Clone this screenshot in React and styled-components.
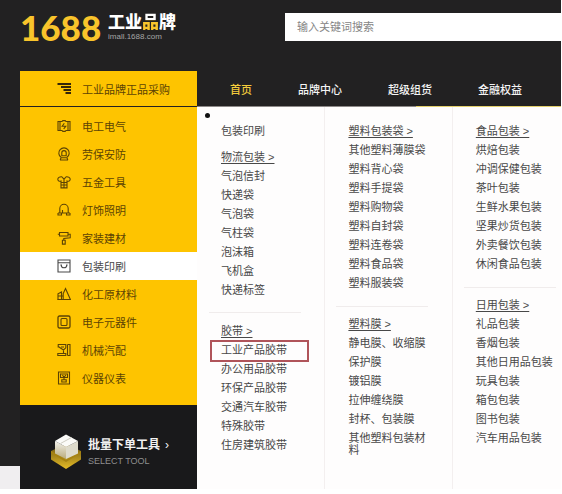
import React from 'react';
import styled, { createGlobalStyle } from 'styled-components';

const GlobalStyle = createGlobalStyle`
	:root {
		--yellow: #fec400;
		--dark: #222122;
		--brown: #5c4304;
		--text: #484848;
	}

	* {
		box-sizing: border-box;
	}

	body {
		margin: 0;
		background: #fff;
		color: var(--text);
		font-family: "Liberation Sans", "Noto Sans CJK SC", sans-serif;
		font-size: 11px;
	}

	a {
		color: inherit;
		text-decoration: none;
	}

	ul {
		margin: 0;
		padding: 0;
		list-style: none;
	}
`;

const Page = styled.div`
	display: flex;
	margin-right: 1px;
	background: var(--dark);
`;
const Gutter = styled.div`
	width: 20px;
	flex: none;
	display: flex;
	flex-direction: column;
	justify-content: flex-end;

	&::after {
		content: "";
		height: 23px;
		background: #f0eef0;
	}
`;
const Main = styled.div`
	flex: 1;
	min-width: 0;
`;

const Header = styled.header`
	display: grid;
	grid-template-columns: 265px 1fr;
	align-items: start;
	padding-top: 13px;
	height: 71px;
`;
const Logo = styled.a`
	display: flex;
	gap: 6px;
`;
const LogoNumber = styled.span`
	width: 82px;
	font-family: Lato, sans-serif;
	font-weight: 900;
	font-size: 35px;
	line-height: 28px;
	color: #f9c42b;
`;
const LogoText = styled.span`
	display: flex;
	flex-direction: column;
`;
const LogoTitle = styled.span`
	font-family: "Noto Sans CJK SC", sans-serif;
	font-weight: 900;
	font-size: 17px;
	line-height: 16px;
	color: #fff;
`;
const LogoAccent = styled.span`
	background: linear-gradient(#fff 50%, #f9c42b 50%);
	background-clip: text;
	color: transparent;
`;
const LogoDomain = styled.span`
	font-size: 8px;
	line-height: 16px;
	color: #a5a5a5;
`;
const Search = styled.input`
	width: 100%;
	height: 28px;
	padding: 0 12px;
	border: 0;
	border-radius: 0;
	background: #fff;
	font: inherit;
	outline: none;

	&::placeholder {
		color: #858585;
		opacity: 1;
	}
`;

const Body = styled.div`
	display: grid;
	grid-template-columns: 177px 1fr;
`;
const Sidebar = styled.aside`
	display: flex;
	flex-direction: column;
`;
const SidebarLink = styled.a`
	display: flex;
	align-items: center;
	gap: 11px;
	height: ${props => props.$title ? '35px' : '28px'};
	padding-left: 37px;
	background: ${props => props.$active ? '#fff' : 'var(--yellow)'};
	color: ${props => props.$active ? 'var(--text)' : 'var(--brown)'};
`;
const Categories = styled.ul`
	margin-top: 1px;
	padding: 5px 0 13px;
	background: var(--yellow);
`;
const Tool = styled.a`
	display: flex;
	align-items: center;
	gap: 7px;
	height: 84px;
	padding: 10px 0 0 31px;
	background: #19191b;
`;
const ToolTitle = styled.strong`
	display: block;
	font-size: 12px;
	line-height: 18px;
	color: #f2f2f2;
`;
const ToolArrow = styled.span`
	margin-left: 5px;
	font-weight: 400;
`;
const ToolCaption = styled.span`
	display: block;
	font-size: 9px;
	line-height: 14px;
	color: #8f8f8f;
`;

const Content = styled.div`
	display: flex;
	flex-direction: column;
	min-width: 0;
`;
const Nav = styled.nav`
	display: flex;
	align-items: center;
	gap: 46px;
	height: 35px;
	padding-left: 33px;
	white-space: nowrap;
`;
const NavLink = styled.a`
	font-weight: 500;
	color: ${props => props.$active ? '#f3cb3c' : '#f4f4f4'};
`;
const Panel = styled.div`
	position: relative;
	flex: 1;
	display: grid;
	grid-template-columns: 7fr 7fr 6fr;
	border-top: 1px solid;
	border-image: linear-gradient(to right, #8d8988 60%, #e2cf6c 60%) 1;
	background: #fefdfd;

	&::before {
		content: "";
		position: absolute;
		top: 6px;
		left: 8px;
		width: 5px;
		height: 5px;
		border-radius: 50%;
		background: #111;
	}
`;
const Column = styled.div`
	padding: 15px 0 0 12px;

	+ div {
		padding-left: 11px;
		border-left: 1px solid #f3efef;
	}
`;
const Group = styled.section`
	max-width: 92px;
	padding-left: 12px;
	margin-bottom: ${props => props.$plain ? '7px' : '0'};
`;
const Divider = styled.hr`
	max-width: 92px;
	margin: ${props => props.$short ? '12px 0 9px' : '13px 0 8px'};
	border: 0;
	border-top: 1px solid #f0ecec;
`;
const GroupTitle = styled.h2`
	margin: 0;
	font-size: 11px;
	font-weight: 400;
	line-height: 19px;

	a {
		text-decoration: ${props => props.$plain ? 'none' : 'underline'};
		text-underline-offset: 2px;
	}
`;
const Item = styled.li`
	position: relative;
	padding: 3px 0 4px;
	line-height: 12px;

	${props => props.$marked && `
		&::after {
			content: "";
			position: absolute;
			inset: -1px -8px -2px -11px;
			border: 2px solid #b0545a;
			pointer-events: none;
		}
	`}
`;

const Icon = ({ children }) => (
	<svg width="14" height="14" viewBox="0 0 14 14" fill="none" stroke="currentColor" strokeWidth="1.1" aria-hidden="true">
		{children}
	</svg>
);

const icons = {
	menu: <path d="M0.5 2H14.5M4 5H14.5M6.500 8H14.5M8.500 11H14.5" stroke="#33250a" strokeWidth="1.9" />,
	electric: <path d="M5 2.500H1v9h4l.8.9h2.400l.8-.9H13v-9H9l-.8-.9H5.800zM3 2.500v9M11 2.500v9M7.300 4.300L5.200 7.200h3.600L6.700 10" />,
	safety: <path d="M4 10.300A5.200 5.200 0 1 1 10 10.300M4.800 8.700V5.800a2.200 2.200 0 0 1 4.400 0v2.900zM4 10.800h6M3 13h8M4 10.800L3.200 13M10 10.800L10.800 13" />,
	hardware: <path d="M4.700 1.700C2.500 1.500 .8 2.800 .8 4.300S2.300 6.600 4 6v6.900h6V6c1.700.6 3.200-.2 3.200-1.700S11.500 1.500 9.300 1.700L7 4.200zM7 4.200V12.800M4.200 7.500h5.600M4.200 10h5.600" />,
	lamp: <path d="M2.800 10V5.500a4.200 4.200 0 0 1 8.400 0V10M1 10h12M1 10v2h3.500v-2M13 10v2H9.500v-2M5.500 10V7" />,
	roller: <path d="M2.500 1.500h8.500v3.500H2.500zM2.500 3.200H.8M11 3.200h2.200v3.600L6.800 7.500v1.700M5.400 9.200h2.800v3.900H5.400z" />,
	packing: <path d="M1 1h12v12H1zM1 3.700h12M4.200 6a2.800 2.800 0 0 0 5.600 0M3.400 6h1.500M9.100 6h1.500" />,
	chemical: <path d="M8.500 1.500L13.400 12.500H6.200V6.500zM1 12.500V6.800L4.500 5v7.500M0.300 12.500h13.400M1 9h5.200" />,
	chip: <><rect x="1" y="1" width="12" height="12" rx="1.500" strokeWidth="1.300" /><rect x="4" y="3.500" width="6" height="7" rx="1" /></>,
	machine: <path d="M.8 1.500h8v3.300L6.500 7 1.200 3.500M1.200 1.500v3M6.500 7v3.500M.8 10.500h8v2h-8zM10.500 1.500H13v11h-2.500M10.500 1.500v11M4 4h3" />,
	meter: <path d="M1.500 1h11v12h-11zM3.500 3h7v3.500h-7zM7 6.500L5.500 4M7 6.500L8.800 4M7 6.500v2.300M4.800 8.800h4.400v2.200H4.800z" />,
};

const categories = [
	{ name: '电工电气', icon: 'electric' },
	{ name: '劳保安防', icon: 'safety' },
	{ name: '五金工具', icon: 'hardware' },
	{ name: '灯饰照明', icon: 'lamp' },
	{ name: '家装建材', icon: 'roller' },
	{ name: '包装印刷', icon: 'packing', active: true },
	{ name: '化工原材料', icon: 'chemical' },
	{ name: '电子元器件', icon: 'chip' },
	{ name: '机械汽配', icon: 'machine' },
	{ name: '仪器仪表', icon: 'meter' },
];

const navLinks = ['首页', '品牌中心', '超级组货', '金融权益'];

const columns = [
	[
		{ title: '包装印刷', plain: true, items: [] },
		{ title: '物流包装', items: ['气泡信封', '快递袋', '气泡袋', '气柱袋', '泡沫箱', '飞机盒', '快递标签'] },
		{ title: '胶带', items: ['工业产品胶带', '办公用品胶带', '环保产品胶带', '交通汽车胶带', '特殊胶带', '住房建筑胶带'] },
	],
	[
		{ title: '塑料包装袋', items: ['其他塑料薄膜袋', '塑料背心袋', '塑料手提袋', '塑料购物袋', '塑料自封袋', '塑料连卷袋', '塑料食品袋', '塑料服装袋'] },
		{ title: '塑料膜', items: ['静电膜、收缩膜', '保护膜', '镀铝膜', '拉伸缠绕膜', '封杯、包装膜', '其他塑料包装材料'] },
	],
	[
		{ title: '食品包装', items: ['烘焙包装', '冲调保健包装', '茶叶包装', '生鲜水果包装', '坚果炒货包装', '外卖餐饮包装', '休闲食品包装'] },
		{ title: '日用包装', items: ['礼品包装', '香烟包装', '其他日用品包装', '玩具包装', '箱包包装', '图书包装', '汽车用品包装'] },
	],
];

const markedItem = '工业产品胶带';

const ToolCube = () => (
	<svg width="30" height="36" viewBox="0 0 30 36" aria-hidden="true">
		<defs>
			<linearGradient id="cubeBase" x1="0" y1="0" x2="0" y2="1">
				<stop offset="0" stopColor="#6b5510" />
				<stop offset="1" stopColor="#e5bb27" />
			</linearGradient>
			<linearGradient id="cubeLeft" x1="0" y1="0" x2="0" y2="1">
				<stop offset="0" stopColor="#f2f1ec" />
				<stop offset="1" stopColor="#b9ab7c" />
			</linearGradient>
		</defs>
		<path d="M0 17L15 10L30 17V25.500L15 35L0 25.500z" fill="url(#cubeBase)" />
		<path d="M0 17L15 26L30 17V19L15 28L0 19z" fill="#a78311" />
		<path d="M4 7L15 13V25L4 19.500z" fill="url(#cubeLeft)" />
		<path d="M15 13L27 7V19.500L15 25z" fill="#dedbcc" />
		<path d="M4 7L15 0.500L27 7L15 13z" fill="#fbfbf8" />
		<path d="M9.500 9.500L20.500 3.500" stroke="#cfcdc3" strokeWidth="1" />
	</svg>
);

const MenuGroup = ({ group }) => (
	<Group $plain={group.plain}>
		<GroupTitle $plain={group.plain}>
			<a href="#">{group.plain ? group.title : group.title + ' >'}</a>
		</GroupTitle>
		<ul>
			{group.items.map(item => (
				<Item key={item} $marked={item === markedItem}>
					<a href="#">{item}</a>
				</Item>
			))}
		</ul>
	</Group>
);

const MenuColumn = ({ groups }) => (
	<Column>
		{groups.map((group, index) => (
			<React.Fragment key={group.title}>
				{index > 0 && !groups[index - 1].plain && <Divider $short={groups.length > 2} />}
				<MenuGroup group={group} />
			</React.Fragment>
		))}
	</Column>
);

const App = () => {

	return (
		<>
			<GlobalStyle />
			<Page>
				<Gutter />
				<Main>
					<Header>
						<Logo href="#">
							<LogoNumber>1688</LogoNumber>
							<LogoText>
								<LogoTitle>工业<LogoAccent>品</LogoAccent>牌</LogoTitle>
								<LogoDomain>imall.1688.com</LogoDomain>
							</LogoText>
						</Logo>
						<Search type="text" aria-label="搜索" placeholder="输入关键词搜索" />
					</Header>
					<Body>
						<Sidebar>
							<SidebarLink href="#" $title>
								<Icon>{icons.menu}</Icon>
								工业品牌正品采购
							</SidebarLink>
							<Categories>
								{categories.map(({ name, icon, active }) => (
									<li key={name}>
										<SidebarLink href="#" $active={active}>
											<Icon>{icons[icon]}</Icon>
											{name}
										</SidebarLink>
									</li>
								))}
							</Categories>
							<Tool href="#">
								<ToolCube />
								<span>
									<ToolTitle>批量下单工具<ToolArrow>›</ToolArrow></ToolTitle>
									<ToolCaption>SELECT TOOL</ToolCaption>
								</span>
							</Tool>
						</Sidebar>
						<Content>
							<Nav>
								{navLinks.map((link, index) => (
									<NavLink key={link} href="#" $active={index === 0}>{link}</NavLink>
								))}
							</Nav>
							<Panel>
								{columns.map(groups => (
									<MenuColumn key={groups[0].title} groups={groups} />
								))}
							</Panel>
						</Content>
					</Body>
				</Main>
			</Page>
		</>
	);

}

export default App;
